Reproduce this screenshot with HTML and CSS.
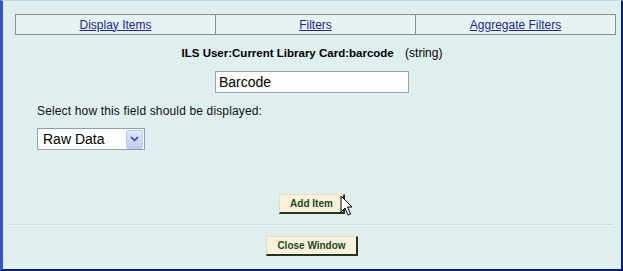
FILE: index.html
```html
<!DOCTYPE html>
<html lang="en">
<head>
  <meta charset="UTF-8">
  <title>Display Items</title>
  <link rel="stylesheet" href="styles.css">
</head>
<body>
  <div class="frame">
    <table class="tabs">
      <tr>
        <td><a href="#">Display Items</a></td>
        <td><a href="#">Filters</a></td>
        <td><a href="#">Aggregate Filters</a></td>
      </tr>
    </table>

    <div class="field-title">
      <b>ILS User:Current Library Card:barcode</b>
      <span class="field-type">(string)</span>
    </div>

    <div class="field-name">
      <input type="text" value="Barcode">
    </div>

    <div class="display-label">Select how this field should be displayed:</div>

    <div class="select-box">
      <span class="select-text">Raw Data</span>
      <span class="select-arrow">
        <svg width="9" height="6" viewBox="0 0 9 6">
          <path d="M1 1 L4.5 4.5 L8 1" fill="none" stroke="#4d6185" stroke-width="1.8"/>
        </svg>
      </span>
    </div>

    <div class="add-row">
      <span class="btn-wrap">
        <button type="button" class="btn">Add Item</button>
        <!-- mouse pointer over the button -->
        <svg class="pointer" width="13" height="22" viewBox="0 0 13 22">
          <path d="M1 1 L1 17 L5 13 L8 20 L10.5 19 L7.5 12 L12 12 Z" fill="#fff" stroke="#000" stroke-width="1"/>
        </svg>
      </span>
    </div>

    <div class="divider"></div>

    <div class="close-row">
      <button type="button" class="btn">Close Window</button>
    </div>
  </div>
</body>
</html>
```

FILE: styles.css
```css
body {
  margin: 0;
  font-family: "Liberation Sans", Arial, sans-serif;
  font-size: 12px;
  color: #000;
}

.frame {
  width: 623px;
  height: 271px;
  box-sizing: border-box;
  background-color: #dfeeee;
  border-left: 3px solid #3456c4;
  border-top: 1px solid #c4d8f2;
  border-right: 2px solid #0c1f6e;
  border-bottom: 2px solid #0c1f6e;
  overflow: hidden;
}

.tabs {
  border-collapse: collapse;
  margin: 13px 0 0 12px;
  width: 601px;
}

.tabs td {
  width: 33.3%;
  height: 19px;
  padding: 0;
  border: 1px solid #8a8f90;
  background-color: #e8f2f2;
  text-align: center;
}

.tabs a {
  color: #1a2a8c;
  text-decoration: underline;
}

.field-title {
  margin-top: 10px;
  line-height: 16px;
  text-align: center;
}

.field-title b {
  font-size: 11.5px;
}

.field-type {
  margin-left: 8px;
}

.field-name {
  margin-top: 10px;
  text-align: center;
}

.field-name input {
  width: 194px;
  height: 22px;
  box-sizing: border-box;
  margin: 0;
  padding: 0 3px;
  border: 1px solid #9aa4a8;
  font-family: "Liberation Sans", Arial, sans-serif;
  font-size: 14px;
  color: #000;
  background: #fff;
}

.display-label {
  margin: 10px 0 0 34px;
  line-height: 16px;
  letter-spacing: 0.15px;
  color: #111;
}

.select-box {
  display: flex;
  align-items: center;
  justify-content: space-between;
  width: 108px;
  height: 22px;
  box-sizing: border-box;
  margin: 9px 0 0 34px;
  padding: 0 1px 0 5px;
  border: 1px solid #8ea0b0;
  background: #fff;
  font-size: 14px;
}

.select-arrow {
  display: flex;
  align-items: center;
  justify-content: center;
  width: 15px;
  height: 17px;
  border: 1px solid #b8c8ee;
  border-radius: 2px;
  background: linear-gradient(#dfe8fc, #bccdf6);
}

.add-row {
  margin-top: 44px;
  text-align: center;
}

.btn-wrap {
  position: relative;
  display: inline-block;
}

.btn {
  margin: 0;
  padding: 0 10px;
  height: 20px;
  border-top: 1px solid #e8dcc4;
  border-left: 1px solid #e8dcc4;
  border-right: 2px solid #22331f;
  border-bottom: 2px solid #22331f;
  background-color: #fbf0dc;
  color: #1c4a1c;
  font-family: "Liberation Sans", Arial, sans-serif;
  font-size: 10px;
  font-weight: bold;
  vertical-align: top;
}

.pointer {
  position: absolute;
  left: 61px;
  top: 1px;
}

.divider {
  margin: 10px 8px 0 7px;
  border-top: 1px solid #cfdcdc;
  border-bottom: 1px solid #eaf4f4;
}

.close-row {
  margin-top: 10px;
  text-align: center;
}
```
